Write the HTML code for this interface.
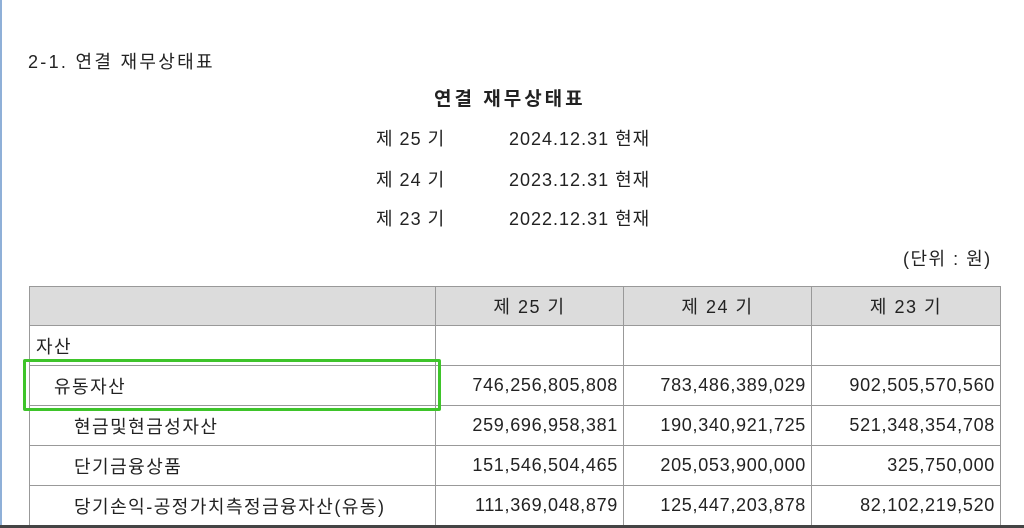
<!DOCTYPE html>
<html><head><meta charset="utf-8"><style>
body{margin:0;width:1024px;height:528px;overflow:hidden;background:#fff;font-family:"Liberation Sans","Noto Sans CJK KR",sans-serif;color:#222;position:relative}
.a{position:absolute;white-space:nowrap;font-size:18px;line-height:22px;letter-spacing:1px}
table{position:absolute;left:29px;top:286px;border-collapse:collapse;font-size:18px}
td{border:1px solid #999;height:40px;padding:0 6px;box-sizing:border-box;white-space:nowrap;letter-spacing:1.5px}
tr.h td{height:39px}
td.n{text-align:right;padding-right:5px;letter-spacing:0.7px}
tr.h td{background:#dcdcdc;text-align:center}
</style></head><body>
<div style="position:absolute;left:0;top:0;width:2px;height:528px;background:#8fb0d8"></div>
<div class="a" style="left:28px;top:51px;letter-spacing:2.3px">2-1. 연결 재무상태표</div>
<div class="a" style="left:434px;top:89px;font-size:19px;font-weight:bold;letter-spacing:3px">연결 재무상태표</div>
<div class="a" style="left:376px;top:128px">제 25 기</div><div class="a" style="left:509px;top:128px">2024.12.31 현재</div>
<div class="a" style="left:376px;top:169px">제 24 기</div><div class="a" style="left:509px;top:169px">2023.12.31 현재</div>
<div class="a" style="left:376px;top:208px">제 23 기</div><div class="a" style="left:509px;top:208px">2022.12.31 현재</div>
<div class="a" style="left:903px;top:248px;letter-spacing:1.5px">(단위 : 원)</div>
<table>
<tr class="h"><td style="width:406px"></td><td style="width:188px">제 25 기</td><td style="width:188px">제 24 기</td><td style="width:189px">제 23 기</td></tr>
<tr><td>자산</td><td></td><td></td><td></td></tr>
<tr><td style="padding-left:24px">유동자산</td><td class="n">746,256,805,808</td><td class="n">783,486,389,029</td><td class="n">902,505,570,560</td></tr>
<tr><td style="padding-left:44px">현금및현금성자산</td><td class="n">259,696,958,381</td><td class="n">190,340,921,725</td><td class="n">521,348,354,708</td></tr>
<tr><td style="padding-left:44px">단기금융상품</td><td class="n">151,546,504,465</td><td class="n">205,053,900,000</td><td class="n">325,750,000</td></tr>
<tr><td style="padding-left:44px">당기손익-공정가치측정금융자산(유동)</td><td class="n">111,369,048,879</td><td class="n">125,447,203,878</td><td class="n">82,102,219,520</td></tr>
</table>
<div style="position:absolute;left:23px;top:359px;width:412px;height:46px;border:3px solid #3ec42a;border-radius:2px"></div>
<div style="position:absolute;left:0;top:525px;width:1024px;height:3px;background:#444"></div>
</body></html>
